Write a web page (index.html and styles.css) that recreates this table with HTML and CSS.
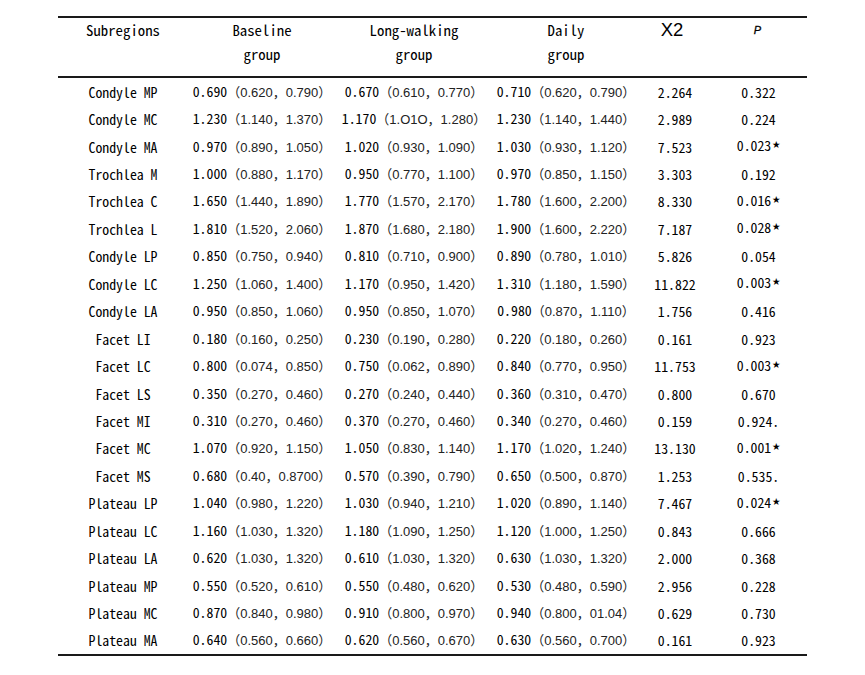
FILE: index.html
```html
<!DOCTYPE html>
<html>
<head>
<meta charset="utf-8">
<link rel="stylesheet" href="styles.css">
</head>
<body>
<table class="tbl">
<colgroup>
<col class="c1"><col class="c2"><col class="c3"><col class="c4"><col class="c5"><col class="c6">
</colgroup>
<thead>
<tr>
<th>Subregions</th>
<th>Baseline<br>group</th>
<th>Long-walking<br>group</th>
<th>Daily<br>group</th>
<th class="x2">X2</th>
<th class="p">P</th>
</tr>
</thead>
<tbody>
<tr><td>Condyle MP</td><td>0.690<span class="ci">（0.620，0.790）</span></td><td>0.670<span class="ci">（0.610，0.770）</span></td><td>0.710<span class="ci">（0.620，0.790）</span></td><td>2.264</td><td>0.322</td></tr>
<tr><td>Condyle MC</td><td>1.230<span class="ci">（1.140，1.370）</span></td><td>1.170<span class="ci">（1.O1O，1.280）</span></td><td>1.230<span class="ci">（1.140，1.440）</span></td><td>2.989</td><td>0.224</td></tr>
<tr><td>Condyle MA</td><td>0.970<span class="ci">（0.890，1.050）</span></td><td>1.020<span class="ci">（0.930，1.090）</span></td><td>1.030<span class="ci">（0.930，1.120）</span></td><td>7.523</td><td>0.023<span class="star">★</span></td></tr>
<tr><td>Trochlea M</td><td>1.000<span class="ci">（0.880，1.170）</span></td><td>0.950<span class="ci">（0.770，1.100）</span></td><td>0.970<span class="ci">（0.850，1.150）</span></td><td>3.303</td><td>0.192</td></tr>
<tr><td>Trochlea C</td><td>1.650<span class="ci">（1.440，1.890）</span></td><td>1.770<span class="ci">（1.570，2.170）</span></td><td>1.780<span class="ci">（1.600，2.200）</span></td><td>8.330</td><td>0.016<span class="star">★</span></td></tr>
<tr><td>Trochlea L</td><td>1.810<span class="ci">（1.520，2.060）</span></td><td>1.870<span class="ci">（1.680，2.180）</span></td><td>1.900<span class="ci">（1.600，2.220）</span></td><td>7.187</td><td>0.028<span class="star">★</span></td></tr>
<tr><td>Condyle LP</td><td>0.850<span class="ci">（0.750，0.940）</span></td><td>0.810<span class="ci">（0.710，0.900）</span></td><td>0.890<span class="ci">（0.780，1.010）</span></td><td>5.826</td><td>0.054</td></tr>
<tr><td>Condyle LC</td><td>1.250<span class="ci">（1.060，1.400）</span></td><td>1.170<span class="ci">（0.950，1.420）</span></td><td>1.310<span class="ci">（1.180，1.590）</span></td><td>11.822</td><td>0.003<span class="star">★</span></td></tr>
<tr><td>Condyle LA</td><td>0.950<span class="ci">（0.850，1.060）</span></td><td>0.950<span class="ci">（0.850，1.070）</span></td><td>0.980<span class="ci">（0.870，1.110）</span></td><td>1.756</td><td>0.416</td></tr>
<tr><td>Facet LI</td><td>0.180<span class="ci">（0.160，0.250）</span></td><td>0.230<span class="ci">（0.190，0.280）</span></td><td>0.220<span class="ci">（0.180，0.260）</span></td><td>0.161</td><td>0.923</td></tr>
<tr><td>Facet LC</td><td>0.800<span class="ci">（0.074，0.850）</span></td><td>0.750<span class="ci">（0.062，0.890）</span></td><td>0.840<span class="ci">（0.770，0.950）</span></td><td>11.753</td><td>0.003<span class="star">★</span></td></tr>
<tr><td>Facet LS</td><td>0.350<span class="ci">（0.270，0.460）</span></td><td>0.270<span class="ci">（0.240，0.440）</span></td><td>0.360<span class="ci">（0.310，0.470）</span></td><td>0.800</td><td>0.670</td></tr>
<tr><td>Facet MI</td><td>0.310<span class="ci">（0.270，0.460）</span></td><td>0.370<span class="ci">（0.270，0.460）</span></td><td>0.340<span class="ci">（0.270，0.460）</span></td><td>0.159</td><td>0.924.</td></tr>
<tr><td>Facet MC</td><td>1.070<span class="ci">（0.920，1.150）</span></td><td>1.050<span class="ci">（0.830，1.140）</span></td><td>1.170<span class="ci">（1.020，1.240）</span></td><td>13.130</td><td>0.001<span class="star">★</span></td></tr>
<tr><td>Facet MS</td><td>0.680<span class="ci">（0.40，0.8700）</span></td><td>0.570<span class="ci">（0.390，0.790）</span></td><td>0.650<span class="ci">（0.500，0.870）</span></td><td>1.253</td><td>0.535.</td></tr>
<tr><td>Plateau LP</td><td>1.040<span class="ci">（0.980，1.220）</span></td><td>1.030<span class="ci">（0.940，1.210）</span></td><td>1.020<span class="ci">（0.890，1.140）</span></td><td>7.467</td><td>0.024<span class="star">★</span></td></tr>
<tr><td>Plateau LC</td><td>1.160<span class="ci">（1.030，1.320）</span></td><td>1.180<span class="ci">（1.090，1.250）</span></td><td>1.120<span class="ci">（1.000，1.250）</span></td><td>0.843</td><td>0.666</td></tr>
<tr><td>Plateau LA</td><td>0.620<span class="ci">（1.030，1.320）</span></td><td>0.610<span class="ci">（1.030，1.320）</span></td><td>0.630<span class="ci">（1.030，1.320）</span></td><td>2.000</td><td>0.368</td></tr>
<tr><td>Plateau MP</td><td>0.550<span class="ci">（0.520，0.610）</span></td><td>0.550<span class="ci">（0.480，0.620）</span></td><td>0.530<span class="ci">（0.480，0.590）</span></td><td>2.956</td><td>0.228</td></tr>
<tr><td>Plateau MC</td><td>0.870<span class="ci">（0.840，0.980）</span></td><td>0.910<span class="ci">（0.800，0.970）</span></td><td>0.940<span class="ci">（0.800，01.04）</span></td><td>0.629</td><td>0.730</td></tr>
<tr><td>Plateau MA</td><td>0.640<span class="ci">（0.560，0.660）</span></td><td>0.620<span class="ci">（0.560，0.670）</span></td><td>0.630<span class="ci">（0.560，0.700）</span></td><td>0.161</td><td>0.923</td></tr>
</tbody>
</table>
</body>
</html>
```
FILE: styles.css
```css
html, body {
  margin: 0;
  padding: 0;
  background: #ffffff;
}

body {
  font-family: "Noto Sans CJK SC", "Liberation Mono", monospace;
  font-feature-settings: "hwid";
  color: #000000;
}

.tbl {
  margin: 16px 0 0 58px;
  border-collapse: collapse;
  table-layout: fixed;
  width: 749px;
  border-top: 2px solid #1a1a1a;
  border-bottom: 2px solid #1a1a1a;
}

.c1 { width: 130px; }
.c2 { width: 148px; }
.c3 { width: 156px; }
.c4 { width: 148px; }
.c5 { width: 70px; }
.c6 { width: 97px; }

.tbl th {
  font-weight: normal;
  font-size: 14.8px;
  line-height: 24px;
  height: 58px;
  padding: 0;
  vertical-align: top;
  text-align: center;
  border-bottom: 2px solid #1a1a1a;
}

.tbl th.x2 {
  font-family: "Liberation Sans", Arial, sans-serif;
  font-feature-settings: normal;
  font-size: 18.5px;
  padding-right: 6px;
}

.tbl th.p {
  font-family: "Liberation Sans", Arial, sans-serif;
  font-feature-settings: normal;
  font-style: italic;
  font-size: 11px;
  -webkit-text-stroke: 0.3px #000000;
  padding-right: 2px;
}

.tbl td {
  font-size: 13.8px;
  font-weight: normal;
  height: 27.45px;
  padding: 0;
  white-space: nowrap;
  text-align: center;
  vertical-align: middle;
  line-height: 16px;
}

.ci {
  font-family: "Liberation Sans", "Noto Sans CJK SC", sans-serif;
  font-feature-settings: normal;
  font-weight: normal;
  font-size: 13px;
  color: #222222;
}

.star {
  font-size: 8px;
  position: relative;
  top: -4px;
  margin-left: 1px;
}
```
